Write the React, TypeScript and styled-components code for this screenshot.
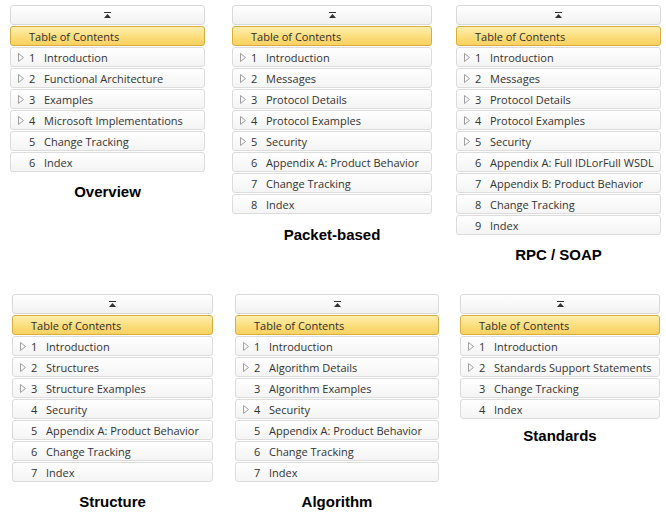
import React from 'react';
import styled, { createGlobalStyle } from 'styled-components';

const GlobalStyle = createGlobalStyle`
  body {
    margin: 0;
    background: #fff;
  }
`;

const Page = styled.div`
  width: 666px;
  height: 517px;
  padding-top: 5px;
  box-sizing: border-box;
  display: grid;
  grid-template-columns: 222px 224px 220px;
  grid-template-rows: 289px auto;
`;

const Figure = styled.div<{ $offset: number; $width: number }>`
  padding-left: ${p => p.$offset}px;
  width: ${p => p.$width}px;
  display: flex;
  flex-direction: column;
`;

const Panel = styled.div`
  display: flex;
  flex-direction: column;
  gap: 1px;
  font-family: "Open Sans", "Noto Sans", sans-serif;
  font-size: 11px;
  color: #333;
`;

const TopButton = styled.div`
  height: 20px;
  box-sizing: border-box;
  border: 1px solid #d9d9d9;
  border-radius: 3px;
  background: linear-gradient(#ffffff, #f1f1f1);
  display: flex;
  align-items: center;
  justify-content: center;
`;

const TitleRow = styled.div`
  height: 20px;
  box-sizing: border-box;
  border: 1px solid #d9ac3f;
  border-radius: 3px;
  background: linear-gradient(#fdeeb0, #fbdd7c 55%, #f8d160);
  display: flex;
  align-items: center;
  padding-left: 18px;
  color: #2e2e2e;
`;

const Row = styled.div`
  height: 20px;
  box-sizing: border-box;
  border: 1px solid #dcdcdc;
  border-radius: 3px;
  background: linear-gradient(#ffffff, #f4f4f4);
  display: flex;
  align-items: center;
  white-space: nowrap;
  overflow: hidden;
`;

const Arrow = styled.span`
  width: 18px;
  flex: none;
  display: flex;
  align-items: center;
  padding-left: 7px;
  box-sizing: border-box;
`;

const Num = styled.span`
  width: 15px;
  flex: none;
`;

const Caption = styled.div<{ $gap: number }>`
  margin-top: ${p => p.$gap}px;
  text-align: center;
  font-family: "Liberation Sans", Arial, sans-serif;
  font-weight: bold;
  font-size: 15px;
  color: #000;
`;

const CollapseIcon = () => (
  <svg width="9" height="7" viewBox="0 0 9 7">
    <rect x="1" y="0" width="7" height="1" fill="#333" />
    <polygon points="1,6 8,6 4.5,2" fill="#333" />
  </svg>
);

const Expander = () => (
  <svg width="6" height="9" viewBox="0 0 6 9">
    <polygon points="0.5,0.5 5.5,4.5 0.5,8.5" fill="none" stroke="#a0a0a0" strokeWidth="1" />
  </svg>
);

interface Entry {
  title: string;
  sub?: boolean;
}

interface Toc {
  name: string;
  offset: number;
  width: number;
  gap: number;
  items: Entry[];
}

const tocs: Toc[] = [
  {
    name: 'Overview', offset: 10, width: 195, gap: 11,
    items: [
      { title: 'Introduction', sub: true },
      { title: 'Functional Architecture', sub: true },
      { title: 'Examples', sub: true },
      { title: 'Microsoft Implementations', sub: true },
      { title: 'Change Tracking' },
      { title: 'Index' },
    ],
  },
  {
    name: 'Packet-based', offset: 10, width: 200, gap: 12,
    items: [
      { title: 'Introduction', sub: true },
      { title: 'Messages', sub: true },
      { title: 'Protocol Details', sub: true },
      { title: 'Protocol Examples', sub: true },
      { title: 'Security', sub: true },
      { title: 'Appendix A: Product Behavior' },
      { title: 'Change Tracking' },
      { title: 'Index' },
    ],
  },
  {
    name: 'RPC / SOAP', offset: 10, width: 205, gap: 11,
    items: [
      { title: 'Introduction', sub: true },
      { title: 'Messages', sub: true },
      { title: 'Protocol Details', sub: true },
      { title: 'Protocol Examples', sub: true },
      { title: 'Security', sub: true },
      { title: 'Appendix A: Full IDLorFull WSDL' },
      { title: 'Appendix B: Product Behavior' },
      { title: 'Change Tracking' },
      { title: 'Index' },
    ],
  },
  {
    name: 'Structure', offset: 12, width: 201, gap: 11,
    items: [
      { title: 'Introduction', sub: true },
      { title: 'Structures', sub: true },
      { title: 'Structure Examples', sub: true },
      { title: 'Security' },
      { title: 'Appendix A: Product Behavior' },
      { title: 'Change Tracking' },
      { title: 'Index' },
    ],
  },
  {
    name: 'Algorithm', offset: 13, width: 204, gap: 11,
    items: [
      { title: 'Introduction', sub: true },
      { title: 'Algorithm Details', sub: true },
      { title: 'Algorithm Examples' },
      { title: 'Security', sub: true },
      { title: 'Appendix A: Product Behavior' },
      { title: 'Change Tracking' },
      { title: 'Index' },
    ],
  },
  {
    name: 'Standards', offset: 14, width: 200, gap: 8,
    items: [
      { title: 'Introduction', sub: true },
      { title: 'Standards Support Statements', sub: true },
      { title: 'Change Tracking' },
      { title: 'Index' },
    ],
  },
];

function App() {
  return (
    <Page>
      <GlobalStyle />
      {tocs.map(t => (
        <Figure key={t.name} $offset={t.offset} $width={t.width}>
          <Panel>
            <TopButton><CollapseIcon /></TopButton>
            <TitleRow>Table of Contents</TitleRow>
            {t.items.map((it, i) => (
              <Row key={it.title}>
                <Arrow>{it.sub && <Expander />}</Arrow>
                <Num>{i + 1}</Num>
                {it.title}
              </Row>
            ))}
          </Panel>
          <Caption $gap={t.gap}>{t.name}</Caption>
        </Figure>
      ))}
    </Page>
  );
}

export default App;
